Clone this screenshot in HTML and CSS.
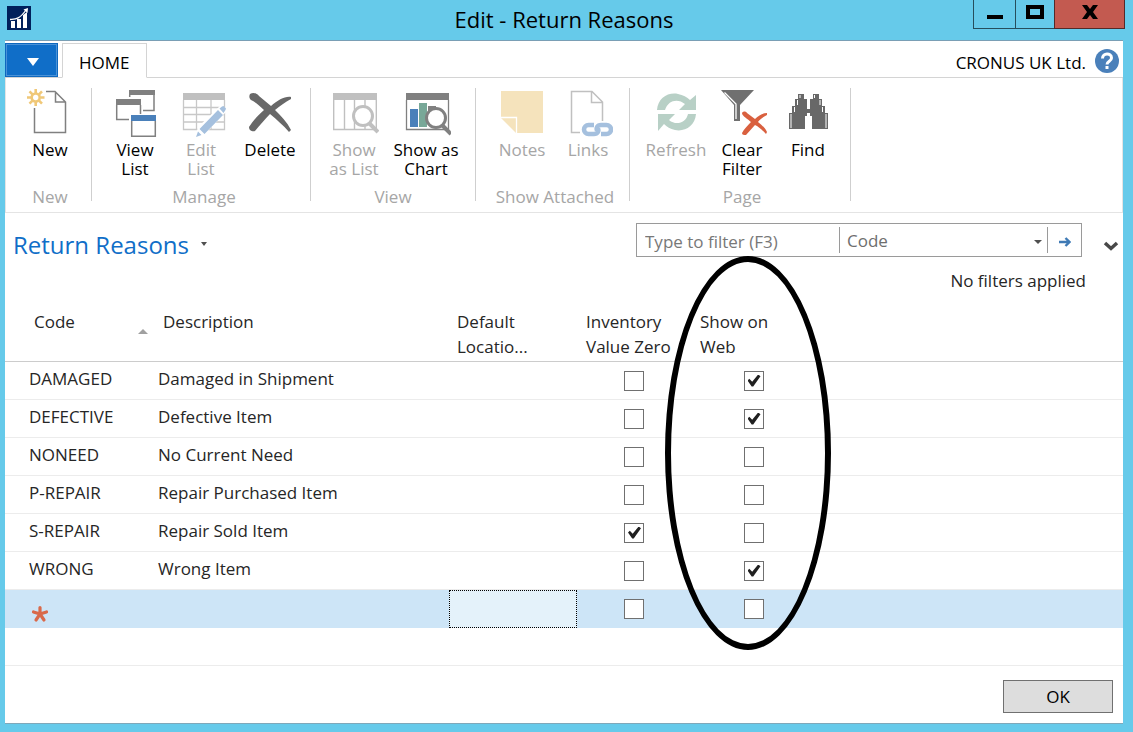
FILE: index.html
```html
<!DOCTYPE html>
<html lang="en">
<head>
<meta charset="utf-8">
<title>Edit - Return Reasons</title>
<link rel="stylesheet" href="styles.css">
</head>
<body>
<div class="window">
  <header class="titlebar">
    <svg class="app-icon" viewBox="0 0 24 24" aria-hidden="true">
      <rect width="24" height="24" fill="#00205b"/>
      <path d="M4 15h4v7H4zM10 13h4v9h-4zM16 9l4-3v16h-4z" fill="#fff"/>
      <path d="M3 13.500C8 13 12 14 19 4" fill="none" stroke="#fff" stroke-width="1.300"/>
      <path d="M16.500 3.500L21 2l-.5 5z" fill="#fff"/>
    </svg>
    <h1 class="title">Edit - Return Reasons</h1>
    <div class="controls">
      <button class="control minimize" aria-label="Minimize"><svg width="18" height="20" viewBox="0 0 18 20"><path d="M1 13h16v4H1z"/></svg></button>
      <button class="control maximize" aria-label="Maximize"><svg width="18" height="20" viewBox="0 0 18 20"><path d="M2 5h14v10H2z" fill="none" stroke="#000" stroke-width="4"/></svg></button>
      <button class="control close" aria-label="Close"><svg width="18" height="20" viewBox="0 0 18 20"><path d="M1 3h5l3 4 3-4h5l-5 7 5 7h-5l-3-4-3 4H1l5-7z"/></svg></button>
    </div>
  </header>

  <main class="client">
    <nav class="tabs">
      <button class="file-menu" aria-label="Application menu"><svg width="12" height="8" viewBox="0 0 12 8"><path d="M0 0h12L6 8z" fill="#fff"/></svg></button>
      <button class="tab">HOME</button>
      <span class="company">CRONUS UK Ltd.</span>
      <button class="help" aria-label="Help"><svg width="24" height="24" viewBox="0 0 24 24"><circle cx="12" cy="12" r="12" fill="#4a80ba"/><path d="M7.500 9.500C7.500 3.500 16.500 3.500 16.500 9c0 3.500-4.500 3-4.500 6.500" fill="none" stroke="#fff" stroke-width="3"/><path d="M10.500 17h3v3h-3z" fill="#fff"/></svg></button>
    </nav>

    <section class="ribbon">
      <div class="group new">
        <div class="tools">
          <button class="tool">
            <svg class="icon" viewBox="0 0 50 50"><path d="M9.500 20v24.500h31V14L30 3.500h-9M30.500 4v10h10" fill="none" stroke="#808080" stroke-width="1.500"/><g stroke="#f0c878" fill="none"><circle cx="10.700" cy="9.500" r="4" stroke-width="2.600"/><path d="M10.700 1v4M10.700 14v4M2 9.500h4M15.500 9.500h4M4.500 3.300l3 3M14 12.700l3 3M4.500 15.700l3-3M14 6.300l3-3" stroke-width="2.600"/></g></svg>
            <span>New</span>
          </button>
        </div>
        <div class="group-name">New</div>
      </div>

      <div class="group manage">
        <div class="tools">
          <button class="tool">
            <svg class="icon" viewBox="0 0 50 50"><g fill="#808080"><path d="M19 2h26v5H19z"/><path d="M6 11h25v6H6z"/></g><path d="M44 7v15.500H33M19.700 7v2M6.700 17v14.500H19M30.500 17v9M21.700 33v15.300h23.600V33" fill="none" stroke="#808080" stroke-width="1.500"/><path d="M21 27h25v6H21z" fill="#4a80ba"/></svg>
            <span>View<br>List</span>
          </button>
          <button class="tool" disabled>
            <svg class="icon" viewBox="0 0 50 50"><path d="M7 5h42v7H7z" fill="#c0c0c0"/><path d="M7.500 12v29.500h41V12M20.500 12v29M35 12v29M8 19.500h40M8 26.500h40M8 34h40" fill="none" stroke="#c8c8c8" stroke-width="1.300"/><path d="M19 50l3-11 23-22 7 5-23 24z" fill="#fff"/><path d="M20 49l2-5.500 3.500 3.500zM23.500 41L42 22l5 5-18.500 19zM43.500 20.500l2.500-2 1.500-.5 2.500 2.500-.5 1.500-2 3z" fill="#a5c0de"/></svg>
            <span>Edit<br>List</span>
          </button>
          <button class="tool wide">
            <svg class="icon" viewBox="0 0 50 50"><path d="M5 6c3-2 7-1 9 2l12 10C33 12 40 8 46 9v2c-6 3-11 7-16 11 6 6 12 12 16 20l-2 2C38 37 32 32 25 26 20 31 15 37 10 43c-2 1-6 0-6-4 4-6 9-12 15-17C14 17 10 14 6 12c-2-2-2-4-1-6z" fill="#686868"/></svg>
            <span>Delete</span>
          </button>
        </div>
        <div class="group-name">Manage</div>
      </div>

      <div class="group view">
        <div class="tools">
          <button class="tool wide" disabled>
            <svg class="icon" viewBox="0 0 50 50"><path d="M4 5h44v7H4z" fill="#c0c0c0"/><path d="M4.700 12v29.500h42.600V12M15.500 12v29M25.500 12v29M36 12v29" fill="none" stroke="#c0c0c0" stroke-width="1.400"/><circle cx="34" cy="28" r="9.500" fill="#fff" stroke="#c0c0c0" stroke-width="3"/><path d="M40 35l9 9" stroke="#c0c0c0" stroke-width="4"/></svg>
            <span>Show<br>as List</span>
          </button>
          <button class="tool wide">
            <svg class="icon" viewBox="0 0 50 50"><path d="M5 5h43v7H5zM27 18h8v12h-8z" fill="#808080"/><path d="M5.500 12v29.500h42V12" fill="none" stroke="#808080" stroke-width="1.300"/><path d="M9 21h8v18H9z" fill="#4a80ba"/><path d="M18 15h8v24h-8z" fill="#78a898"/><circle cx="35" cy="30" r="9.500" fill="#fff" stroke="#808080" stroke-width="3"/><path d="M41 37l9 9" stroke="#808080" stroke-width="4"/></svg>
            <span>Show as<br>Chart</span>
          </button>
        </div>
        <div class="group-name">View</div>
      </div>

      <div class="group attached">
        <div class="tools">
          <button class="tool" disabled>
            <svg class="icon" viewBox="0 0 50 50"><path d="M4 3h42v42H4z" fill="#f5e3bc"/><path d="M4 30v15h15z" fill="#fff"/><path d="M4 29.500h15.500V45" fill="none" stroke="#fff" stroke-width="1.300"/></svg>
            <span>Notes</span>
          </button>
          <button class="tool" disabled>
            <svg class="icon" viewBox="0 0 50 50"><path d="M17 44.500H8.500v-41H29L39.500 14v19M28.500 4v10.500h11" fill="none" stroke="#c0c0c0" stroke-width="1.500"/><path d="M31 37h-5.500a4.500 4.500 0 0 0 0 9H31c4 0 5-3 4-5.500M38 46h5.500a4.500 4.500 0 0 0 0-9H38c-4 0-5 3-4 5.500" fill="none" stroke="#a5c0de" stroke-width="4.500"/></svg>
            <span>Links</span>
          </button>
        </div>
        <div class="group-name">Show Attached</div>
      </div>

      <div class="group page">
        <div class="tools">
          <button class="tool" disabled>
            <svg class="icon" viewBox="0 0 50 50"><path d="M6 22C7 10 17 4 27 6c5 1 9 3 12 6l6-5v15H28l6-6c-7-6-17-4-20 6z" fill="#b8d0c6"/><path d="M45 26c-1 12-11 18-21 16-5-1-8-3-11-6l-6 7V26h17l-6 6c7 6 17 3 19-6z" fill="#b8d0c6"/></svg>
            <span>Refresh</span>
          </button>
          <button class="tool">
            <svg class="icon" viewBox="0 0 50 50"><path d="M4 2h33L23 17v16h-6V17z" fill="#707070"/><path d="M7.500 4.500L19 16v15" fill="none" stroke="#fff" stroke-width="1.300"/><path d="M25 25c1-2 4-2 5 0l8 6c4-4 8-6 12-6v2c-4 2-7 4-9 7 4 3 7 6 9 10l-1 2c-4-4-7-7-11-9l-9 10c-2 0-4 0-4-2 2-4 6-8 9-11-3-3-9-6-9-9z" fill="#d9603f"/></svg>
            <span>Clear<br>Filter</span>
          </button>
          <button class="tool">
            <svg class="icon" viewBox="0 0 50 50"><path d="M15 6h6v5h3v10h3V11h3V6h6v5h3v7h3v7h3v16H29V28h-2v-3h-3v3h-2v13H6V25h3v-7h3v-7h3z" fill="#686868"/><path d="M8 40V26M11.500 24v-5M14.500 17v-5M17 7v3M43 40V26M39.500 24v-5M37 17v-5M31.500 7v3" stroke="#fff" stroke-width="1"/></svg>
            <span>Find</span>
          </button>
        </div>
        <div class="group-name">Page</div>
      </div>
    </section>

    <section class="page-head">
      <button class="page-title">Return Reasons <svg width="6" height="4" viewBox="0 0 6 4"><path d="M0 0h6L3 4z" fill="#505050"/></svg></button>
      <div class="filter-area">
        <div class="filter-row">
          <form class="filter">
            <input class="filter-text" type="text" placeholder="Type to filter (F3)" aria-label="Type to filter">
            <span class="field">
              <select class="field-select" aria-label="Filter field"><option>Code</option></select>
              <svg class="field-arrow" width="8" height="4" viewBox="0 0 8 4"><path d="M0 0h8L4 4z" fill="#505050"/></svg>
            </span>
            <button class="go" type="button" aria-label="Apply filter"><svg width="12" height="10" viewBox="0 0 12 10"><path d="M0 5h10M6.500 1l4 4-4 4" fill="none" stroke="#3f7ab5" stroke-width="2.400"/></svg></button>
          </form>
          <button class="expand" aria-label="Expand filter pane"><svg width="16" height="10" viewBox="0 0 16 10"><path d="M2 2l6 5.500L14 2" fill="none" stroke="#484848" stroke-width="3.500"/></svg></button>
        </div>
        <div class="filter-status">No filters applied</div>
      </div>
    </section>

    <section class="list">
      <table class="grid">
        <colgroup><col class="c-mark"><col class="c-code"><col class="c-desc"><col class="c-loc"><col class="c-inv"><col class="c-web"><col></colgroup>
        <thead>
          <tr>
            <th></th>
            <th><span class="sorted">Code <svg width="10" height="5" viewBox="0 0 10 5"><path d="M5 0l5 5H0z" fill="#a0a0a0"/></svg></span></th>
            <th>Description</th><th>Default<br>Locatio...</th><th>Inventory<br>Value Zero</th><th>Show on<br>Web</th><th></th>
          </tr>
        </thead>
        <tbody>
          <tr><td></td><td>DAMAGED</td><td>Damaged in Shipment</td><td></td><td class="tick"><input type="checkbox" aria-label="Inventory Value Zero"></td><td class="tick"><input type="checkbox" aria-label="Show on Web" checked></td><td></td></tr>
          <tr><td></td><td>DEFECTIVE</td><td>Defective Item</td><td></td><td class="tick"><input type="checkbox" aria-label="Inventory Value Zero"></td><td class="tick"><input type="checkbox" aria-label="Show on Web" checked></td><td></td></tr>
          <tr><td></td><td>NONEED</td><td>No Current Need</td><td></td><td class="tick"><input type="checkbox" aria-label="Inventory Value Zero"></td><td class="tick"><input type="checkbox" aria-label="Show on Web"></td><td></td></tr>
          <tr><td></td><td>P-REPAIR</td><td>Repair Purchased Item</td><td></td><td class="tick"><input type="checkbox" aria-label="Inventory Value Zero"></td><td class="tick"><input type="checkbox" aria-label="Show on Web"></td><td></td></tr>
          <tr><td></td><td>S-REPAIR</td><td>Repair Sold Item</td><td></td><td class="tick"><input type="checkbox" aria-label="Inventory Value Zero" checked></td><td class="tick"><input type="checkbox" aria-label="Show on Web"></td><td></td></tr>
          <tr><td></td><td>WRONG</td><td>Wrong Item</td><td></td><td class="tick"><input type="checkbox" aria-label="Inventory Value Zero"></td><td class="tick"><input type="checkbox" aria-label="Show on Web" checked></td><td></td></tr>
          <tr class="new-row"><td></td><td class="marker"><svg width="18" height="18" viewBox="0 0 18 18"><path d="M9 9V2.500M9 9L2.500 7M9 9l6.500-2M9 9l-4 6M9 9l4 6" stroke="#d9694a" stroke-width="3.200" stroke-linecap="round"/></svg></td><td></td><td class="focused"><div class="focus-box"></div></td><td class="tick"><input type="checkbox" aria-label="Inventory Value Zero"></td><td class="tick"><input type="checkbox" aria-label="Show on Web"></td><td></td></tr>
          <tr><td></td><td></td><td></td><td></td><td></td><td></td><td></td></tr>
        </tbody>
      </table>
      <div class="callout"></div>
    </section>

    <footer class="footer"><button class="ok">OK</button></footer>
  </main>
</div>
</body>
</html>
```

FILE: styles.css
```css
* { box-sizing: border-box; }

body {
  margin: 0;
  font-family: "Open Sans", "Noto Sans", sans-serif;
  font-size: 17px;
  color: #262626;
}

button, input, select {
  font: inherit;
  color: inherit;
  margin: 0;
  padding: 0;
  border: 0;
  border-radius: 0;
  background: none;
}

.window {
  display: flex;
  flex-direction: column;
  min-height: 100vh;
  padding: 0 10px 8px 5px;
  background: #66caea;
}

.titlebar {
  display: grid;
  grid-template-columns: 160px 1fr 160px;
  height: 40px;
}

.app-icon { width: 24px; height: 24px; margin: 6px 2px; }

.title {
  margin: 0;
  text-align: center;
  font-size: 22px;
  font-weight: 400;
  line-height: 38px;
  color: #000;
}

.controls { display: flex; justify-content: flex-end; height: 29px; margin-right: -2px; }

.control {
  display: flex;
  align-items: center;
  justify-content: center;
  width: 39px;
  padding-bottom: 4px;
  border: 1px solid #264e5c;
  border-top: 0;
  border-right: 0;
}

.minimize { width: 42px; }
.close { width: 71px; background: #c35a50; border: 1px solid #532a2a; border-top: 0; }

.client {
  flex: 1;
  display: flex;
  flex-direction: column;
  background: #fff;
  border-top: 1px solid #7a9fb5;
  border-bottom: 1px solid #7fa8ba;
}

.tabs {
  display: flex;
  align-items: center;
  height: 37px;
  border-bottom: 1px solid #d4d4d4;
}

.file-menu {
  align-self: flex-start;
  width: 53px;
  height: 34px;
  margin-top: 2px;
  padding: 0 0 2px 2px;
  background: #106ec8;
  border: 1px solid #0f68be;
  box-shadow: inset 0 0 0 1px #4a92d8;
}

.tab {
  align-self: flex-end;
  height: 35px;
  margin: 0 0 -1px 4px;
  padding: 3px 16px 0;
  border: 1px solid #d4d4d4;
  border-bottom-color: #fff;
  background: #fff;
  color: #000;
}

.company { margin-left: auto; padding-top: 6px; color: #000; }
.help { display: flex; margin: 4px 4px 0 9px; }

.ribbon {
  display: flex;
  padding: 10px 0 11px;
  border: 1px solid #e4e4e4;
  border-top: 0;
}

.group {
  display: flex;
  flex-direction: column;
  justify-content: space-between;
  height: 113px;
  padding: 0 10px;
  border-right: 1px solid #cfcfcf;
}

.group.new { padding: 0 8px 0 11px; }
.group.manage { padding: 0 4px 0 10px; }
.group.view .tools { margin: 0 3px 0 -3px; }
.group.attached { padding: 0 8px 0 13px; }
.group.page { padding: 0 9px 0 13px; }
.tools { display: flex; }

.tool {
  display: flex;
  flex-direction: column;
  align-items: center;
  width: 66px;
  line-height: 19px;
  color: #000;
  white-space: nowrap;
}

.tool.wide { width: 72px; }
.tool:disabled { color: #a6a6a6; }
.icon { width: 50px; height: 50px; margin-bottom: 2px; }
.group-name { text-align: center; line-height: 19px; margin-bottom: -5px; color: #a6a6a6; }

.page-head {
  display: flex;
  justify-content: space-between;
  align-items: flex-start;
  padding: 10px 4px 0 8px;
}

.page-title {
  display: flex;
  align-items: center;
  gap: 12px;
  line-height: 44px;
  font-size: 24px;
  color: #106ec8;
}

.page-title svg { margin-bottom: 3px; }

.filter-area { flex: 0 1 483px; }
.filter-row { display: flex; align-items: center; gap: 21px; }

.filter {
  flex: 1;
  display: flex;
  height: 34px;
  padding: 3px 0;
  border: 1px solid #9a9a9a;
}

.filter-text { flex: 1; min-width: 0; padding: 2px 8px 0; color: #6e6e6e; }
.filter-text::placeholder { color: #787878; opacity: 1; }

.field {
  position: relative;
  flex: 0 1 209px;
  display: flex;
  border: 1px solid #9a9a9a;
  border-width: 0 1px;
}

.field-select { flex: 1; padding: 0 7px; appearance: none; color: #6e6e6e; }
.field-arrow { position: absolute; right: 5px; top: 13px; }
.go { width: 33px; }
.expand { display: flex; padding-top: 12px; }
.filter-status { margin-right: 33px; line-height: 24px; padding-top: 12px; text-align: right; }

.list { position: relative; padding-top: 16px; }

.grid { width: 100%; table-layout: fixed; border-collapse: separate; border-spacing: 0; }
.c-mark { width: 21px; }
.c-code { width: 129px; }
.c-desc { width: 289px; }
.c-loc { width: 133px; }
.c-inv { width: 114px; }
.c-web { width: 125px; }

th {
  padding: 0 0 2px 8px;
  border-bottom: 1px solid #cccccc;
  text-align: left;
  vertical-align: top;
  font-weight: 400;
  line-height: 25px;
  white-space: nowrap;
}

th:nth-child(4) { padding-left: 13px; }
th:nth-child(5), th:nth-child(6) { padding-left: 9px; }
.sorted { display: flex; justify-content: space-between; align-items: flex-end; padding-right: 7px; }

td {
  height: 38px;
  padding: 0 0 4px 3px;
  border-bottom: 1px solid #ececec;
  line-height: 24px;
}

td.tick { padding: 0; text-align: center; }

.tick input {
  display: block;
  position: relative;
  width: 20px;
  height: 20px;
  margin: 0 auto;
  appearance: none;
  background: #fff;
  border: 1px solid #707070;
}

.tick input:checked::before {
  content: "";
  position: absolute;
  left: 3px;
  top: 3px;
  width: 13px;
  height: 12px;
  background: #202020;
  clip-path: polygon(0 50%, 14% 36%, 36% 60%, 82% 0, 100% 14%, 44% 100%, 32% 100%);
}

.new-row td { background: #cde5f7; border-bottom-color: #cde5f7; }
.new-row .marker { padding: 10px 0 0 5px; line-height: 0; }
.new-row .focused { padding: 0 0 0 5px; border-bottom: 0; }
.focus-box { height: 38px; background: #e4f2fa; border: 1px dotted #000; }

.callout {
  position: absolute;
  left: 660px;
  top: -37px;
  width: 166px;
  height: 394px;
  border: 6px solid #000;
  border-radius: 50%;
  pointer-events: none;
}

.footer { display: flex; justify-content: flex-end; margin-top: auto; padding: 14px 10px 10px; }
.ok { width: 110px; height: 33px; background: #dddddd; border: 1px solid #707070; color: #000; }
```
